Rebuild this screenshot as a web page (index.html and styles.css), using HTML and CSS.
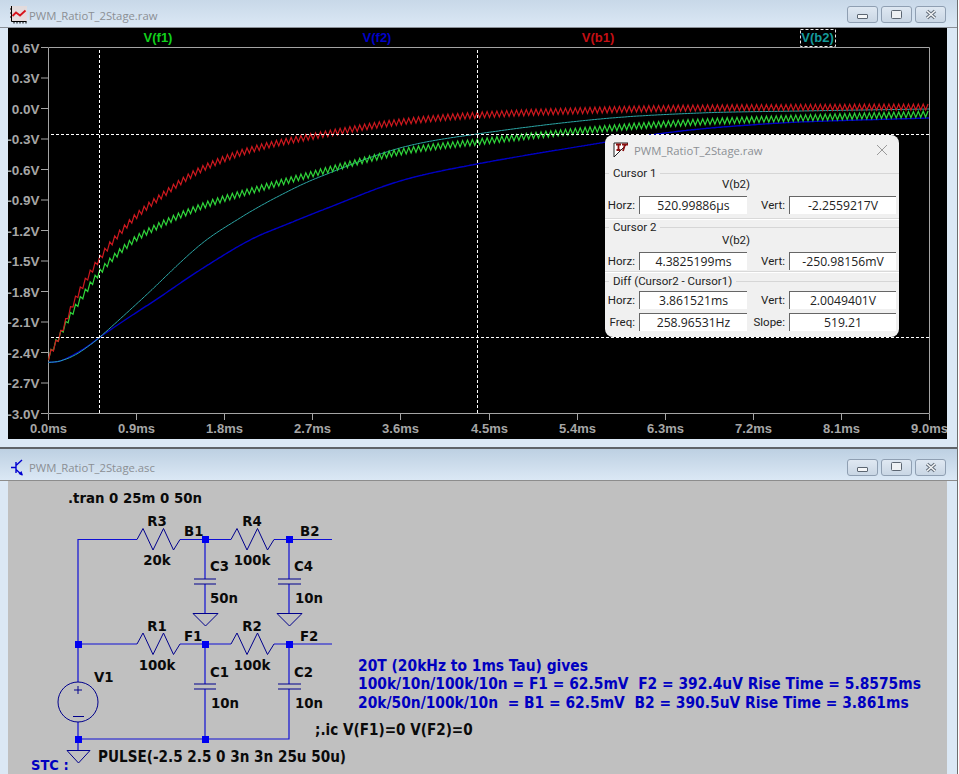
FILE: index.html
```html
<!DOCTYPE html>
<html lang="en">
<head>
<meta charset="utf-8">
<title>PWM_RatioT_2Stage</title>
<link rel="stylesheet" href="styles.css">
</head>
<body>
<div class="desktop">
  <section class="window window-plot">
    <header class="titlebar">
      <svg class="title-icon" width="17" height="18" viewBox="0 0 17 18">
        <rect x="0" y="0" width="17" height="15" fill="#f4d8d0" opacity=".55"/>
        <path class="ic-axis" d="M1.5 0V15.5H16.5M0 3H1.5M0 7H1.5M0 11H1.5M4 15.5V17.5M7 15.5V17.5M10 15.5V17.5M13 15.5V17.5M16 15.5V17.5"/>
        <path class="ic-curve" d="M2.5 10L6 6.5L10 9.5L15.5 4.5"/>
      </svg>
      <span class="title-text">PWM_RatioT_2Stage.raw</span>
      <div class="controls">
        <button class="ctl"><span class="ctl-min"></span></button>
        <button class="ctl"><span class="ctl-max"></span></button>
        <button class="ctl"><svg width="14" height="11" viewBox="0 0 14 11"><path class="ctl-x" d="M3 2L11 9M11 2L3 9"/><path class="ctl-xi" d="M3 2L11 9M11 2L3 9"/></svg></button>
      </div>
    </header>
    <div class="plot-area">
      <svg id="plot" class="plot" width="939" height="411" viewBox="8 28 939 411">
        <defs><clipPath id="frame"><rect x="48" y="47" width="882" height="367"/></clipPath></defs>
        <g id="axes"></g>
        <g id="curves" clip-path="url(#frame)"></g>
        <g class="cursors">
          <path d="M99.5 50V413M477.5 50V413M51 134.5H929M51 337.5H929"/>
        </g>
        <text class="legend l-green" x="158" y="42">V(f1)</text>
        <text class="legend l-blue" x="377" y="42">V(f2)</text>
        <text class="legend l-red" x="598" y="42">V(b1)</text>
        <text class="legend l-teal" x="817.5" y="42">V(b2)</text>
        <rect class="legend-box" x="800.5" y="29.5" width="35" height="17"/>
      </svg>
      <aside class="dialog">
        <header class="dlg-title">
          <svg width="16" height="16" viewBox="0 0 16 16">
            <path class="dlg-tri" d="M1 1H15L1 15Z"/>
            <path class="dlg-lt" d="M3 2.5H8M5.500 2.500V8M3.500 8H7.500M9 2.500H15M12 2.500L10 9"/>
          </svg>
          <span class="dlg-name">PWM_RatioT_2Stage.raw</span>
          <svg class="dlg-close" width="12" height="12" viewBox="0 0 12 12"><path d="M1 1L11 11M11 1L1 11"/></svg>
        </header>
        <div class="group group-a">
          <div class="group-head"><span>Cursor 1</span></div>
          <div class="trace">V(b2)</div>
          <div class="row"><label>Horz:</label><output>520.99886µs</output><label>Vert:</label><output>-2.2559217V</output></div>
        </div>
        <div class="group group-b">
          <div class="group-head"><span>Cursor 2</span></div>
          <div class="trace">V(b2)</div>
          <div class="row"><label>Horz:</label><output>4.3825199ms</output><label>Vert:</label><output>-250.98156mV</output></div>
        </div>
        <div class="group group-c">
          <div class="group-head"><span>Diff (Cursor2 - Cursor1)</span></div>
          <div class="row"><label>Horz:</label><output>3.861521ms</output><label>Vert:</label><output>2.0049401V</output></div>
          <div class="row row-last"><label>Freq:</label><output>258.96531Hz</output><label>Slope:</label><output>519.21</output></div>
        </div>
      </aside>
    </div>
  </section>

  <section class="window window-sch">
    <header class="titlebar titlebar-sch">
      <svg class="title-icon" width="14" height="17" viewBox="0 0 14 17">
        <path class="ic-tr" d="M5 3V14M0 8.500H5M5 6.500L11 1M5 10.500L11 16"/>
        <path class="ic-trh" d="M12 16.500L7.500 15L10.500 12Z"/>
      </svg>
      <span class="title-text">PWM_RatioT_2Stage.asc</span>
      <div class="controls">
        <button class="ctl"><span class="ctl-min"></span></button>
        <button class="ctl"><span class="ctl-max"></span></button>
        <button class="ctl"><svg width="14" height="11" viewBox="0 0 14 11"><path class="ctl-x" d="M3 2L11 9M11 2L3 9"/><path class="ctl-xi" d="M3 2L11 9M11 2L3 9"/></svg></button>
      </div>
    </header>
    <div class="sch-area">
      <svg class="sch" width="939" height="293" viewBox="8 481 939 293">
        <path class="wire" d="M78 644V539.500H137M180 539.500H231M274 539.500H332M205 539.500V579M205 584V613M289 539.500V579M289 584V613M78 644H137M180 644H231M274 644H332M205 644V684M205 689V739M289 644V684M289 689V739H78M78 644V682M78 722V750"/>
        <path class="part" d="M137 539.500L143 528.500L153 550L163.500 528.500L173.500 550L180 539.500M231 539.500L237 528.500L247 550L257.500 528.500L267.500 550L274 539.500M137 644L143 633L153 654.500L163.500 633L173.500 654.500L180 644M231 644L237 633L247 654.500L257.500 633L267.500 654.500L274 644"/>
        <path class="part" d="M194 579H216M194 584H216M278 579H301M278 584H301M194 684H216M194 689H216M278 684H301M278 689H301"/>
        <path class="part" d="M193 613.500H218L205.500 626ZM277 613.500H302L289.500 626ZM67 750.500H90L78.500 763Z"/>
        <circle class="part" cx="78" cy="702" r="20"/>
        <path class="part" d="M78 686V694M74 690H82M73 716.500H84"/>
        <g class="dots">
          <rect x="202" y="536" width="7" height="7"/><rect x="286" y="536" width="7" height="7"/>
          <rect x="75" y="641" width="7" height="7"/><rect x="202" y="641" width="7" height="7"/><rect x="286" y="641" width="7" height="7"/>
          <rect x="75" y="736" width="7" height="7"/><rect x="202" y="736" width="7" height="7"/>
        </g>
        <g class="labels">
          <text x="68" y="503">.tran 0 25m 0 50n</text>
          <text class="mid" x="157" y="526">R3</text><text class="mid" x="157" y="565">20k</text>
          <text x="184" y="536">B1</text>
          <text class="mid" x="252" y="526">R4</text><text class="mid" x="252" y="565">100k</text>
          <text x="300" y="536">B2</text>
          <text x="210" y="571">C3</text><text x="210" y="603">50n</text>
          <text x="294" y="571">C4</text><text x="295" y="603">10n</text>
          <text class="mid" x="157" y="631">R1</text><text class="mid" x="157" y="670">100k</text>
          <text x="184" y="641">F1</text>
          <text class="mid" x="252" y="631">R2</text><text class="mid" x="252" y="670">100k</text>
          <text x="300" y="641">F2</text>
          <text x="210" y="677">C1</text><text x="211" y="708">10n</text>
          <text x="294" y="677">C2</text><text x="295" y="708">10n</text>
          <text x="94" y="682">V1</text>
          <text class="wide" x="98" y="762">PULSE(-2.5 2.5 0 3n 3n 25u 50u)</text>
          <text class="wide" x="315" y="735">;.ic V(F1)=0 V(F2)=0</text>
        </g>
        <g class="notes">
          <text class="stc" x="31" y="770">STC :</text>
          <text x="358" y="671">20T (20kHz to 1ms Tau) gives</text>
          <text x="358" y="689" xml:space="preserve">100k/10n/100k/10n = F1 = 62.5mV  F2 = 392.4uV Rise Time = 5.8575ms</text>
          <text x="358" y="708" xml:space="preserve">20k/50n/100k/10n  = B1 = 62.5mV  B2 = 390.5uV Rise Time = 3.861ms</text>
        </g>
      </svg>
    </div>
  </section>
</div>
<script src="plot.js"></script>
</body>
</html>
```
FILE: styles.css
```css
* { box-sizing: border-box; }
html, body { margin: 0; padding: 0; }
body {
  width: 959px;
  height: 774px;
  overflow: hidden;
  background: #ffffff;
}
.desktop {
  width: 958px;
  height: 774px;
  border-right: 1px solid #6e6e6e;
  display: flex;
  flex-direction: column;
  font-family: "Open Sans", "Liberation Sans", sans-serif;
}
.window {
  background: #dbe8f5;
  padding: 0 10px 0 8px;
  flex: none;
}
.window-plot { height: 449px; border-bottom: 2px solid #5f6368; }
.window-sch { flex: 1; }
.titlebar {
  height: 28px;
  margin: 0 -10px 0 -8px;
  padding: 0 11px 0 10px;
  display: flex;
  align-items: center;
  gap: 2px;
  background: linear-gradient(#c8d8e8, #dbe8f5);
  border-bottom: 1px solid #8a8f96;
}
.titlebar-sch { height: 32px; background: linear-gradient(#bdd0e2, #dbe8f5); border-bottom-color: #8c8c8c; padding-left: 11px; gap: 4px; }
.title-icon { flex: none; margin-top: 2px; }
.titlebar-sch .title-icon { margin-top: 6px; }
.ic-axis { fill: none; stroke: #000; stroke-width: 1; }
.ic-curve { fill: none; stroke: #d8141c; stroke-width: 1.8; }
.ic-tr { fill: none; stroke: #0000d0; stroke-width: 1.4; }
.ic-trh { fill: #0000d0; }
.title-text {
  margin-top: 3px;
  font-size: 11.3px;
  color: #8b8f94;
  white-space: nowrap;
}
.titlebar-sch .title-text { margin-top: 6px; }
.controls {
  margin-left: auto;
  margin-top: 2px;
  display: flex;
  gap: 3px;
}
.titlebar-sch .controls { margin-top: 5px; }
.ctl {
  width: 31px;
  height: 17px;
  padding: 0;
  display: flex;
  align-items: center;
  justify-content: center;
  border: 1px solid #8f9fb2;
  border-radius: 3px;
  background: linear-gradient(#dfe8f2, #c9d6e4);
}
.ctl-min {
  display: block;
  width: 11px;
  height: 5px;
  margin-top: 4px;
  border: 1px solid #5c6672;
  border-radius: 1px;
  background: #f4f6f8;
}
.ctl-max {
  display: block;
  width: 11px;
  height: 9px;
  margin-bottom: 1px;
  border: 1.5px solid #5c6672;
  border-radius: 1.5px;
  background: #eef1f4;
}
.ctl-x { fill: none; stroke: #66707c; stroke-width: 3.6; }
.ctl-xi { fill: none; stroke: #f6f7f8; stroke-width: 1.4; }
.plot-area {
  position: relative;
  width: 939px;
  height: 411px;
  background: #000;
}
.plot { display: block; font-family: "Liberation Sans", Arial, sans-serif; }
.axis-line { fill: none; stroke: #a4a4a4; stroke-width: 1; }
.axis-label { fill: #a6a6a6; font-size: 13px; font-weight: 700; }
.y-label { font-size: 13.5px; text-anchor: end; }
.x-label { text-anchor: middle; }
.curve { fill: none; stroke-width: 1.2; stroke-linejoin: miter; }
.c-green { stroke: #2fd43a; }
.c-red { stroke: #cc181e; }
.c-blue { stroke: #0000c4; stroke-width: 1.4; }
.c-teal { stroke: #2ba5a5; stroke-width: 1; }
.cursors path { fill: none; stroke: #ffffff; stroke-width: 1; stroke-dasharray: 3 2; }
.legend { font-size: 13px; font-weight: 700; text-anchor: middle; }
.l-green { fill: #12d01c; }
.l-blue { fill: #0000c8; }
.l-red { fill: #c40f14; }
.l-teal { fill: #159a9a; }
.legend-box { fill: none; stroke: #e8e8e8; stroke-width: 1; stroke-dasharray: 3 2; }

.dialog {
  position: absolute;
  left: 597px;
  top: 107px;
  width: 294px;
  height: 202px;
  background: #f0f0f0;
  border-radius: 8px;
  font-size: 12px;
  color: #222;
  overflow: hidden;
}
.dlg-title {
  height: 32px;
  padding: 0 10px 2px 8px;
  display: flex;
  align-items: center;
  gap: 5px;
}
.dlg-tri { fill: #fff; stroke: #222; stroke-width: 1; }
.dlg-lt { fill: none; stroke: #8c1010; stroke-width: 1.8; }
.dlg-name { font-size: 11.3px; color: #8b8f94; }
.dlg-close { margin-left: auto; margin-right: 1px; }
.dlg-close path { fill: none; stroke: #9a9a9a; stroke-width: 1; }
.group { border-bottom: 1px solid #d9d9d9; box-shadow: 0 1px 0 #fff; }
.group-a { height: 52px; }
.group-b { height: 53px; padding-top: 2px; }
.group-c { border-bottom: 0; box-shadow: none; padding-top: 3px; }
.group-head {
  height: 12px;
  margin-bottom: -1px;
  display: flex;
  align-items: center;
  font-family: Roboto, "Liberation Sans", sans-serif;
  font-size: 11.5px;
  line-height: 12px;
}
.group-head::before, .group-head::after {
  content: "";
  height: 1px;
  background: #d6d6d6;
}
.group-head::before { width: 4px; margin-right: 4px; flex: none; }
.group-head::after { flex: 1; margin-left: 4px; }
.group-c .group-head { margin-bottom: 4px; }
.trace {
  height: 12px;
  line-height: 12px;
  margin-bottom: 6px;
  padding-right: 32px;
  text-align: center;
  font-family: Roboto, "Liberation Sans", sans-serif;
  font-size: 11.5px;
}
.group-b .trace { margin-top: 2px; }
.row {
  display: grid;
  grid-template-columns: 34px 108px 42px 107px;
  height: 17px;
  align-items: center;
}
.row label {
  text-align: right;
  padding-right: 4px;
  white-space: nowrap;
  font-family: Roboto, "Liberation Sans", sans-serif;
  font-size: 11.5px;
}
.row output {
  display: block;
  height: 100%;
  background: #fff;
  border-top: 1px solid #666;
  border-left: 1px solid #666;
  text-align: center;
  font-size: 12.2px;
  line-height: 17px;
  white-space: nowrap;
}
.row-last { margin-top: 5px; height: 18px; }

.sch-area {
  width: 939px;
  height: 293px;
  background: #c0c0c0;
}
.sch { display: block; font-family: "DejaVu Sans", sans-serif; }
.wire { fill: none; stroke: #1010d4; stroke-width: 1.2; }
.part { fill: none; stroke: #00008c; stroke-width: 1; }
.dots rect { fill: #0000f0; }
.labels text { fill: #0a0a0a; font-size: 14.8px; font-weight: 700; font-stretch: condensed; }
.labels text.mid { text-anchor: middle; }
.labels text.wide { font-size: 15.1px; }
.notes text { fill: #0000c0; font-size: 15.4px; font-weight: 700; font-stretch: condensed; white-space: pre; }
.notes text.stc { font-size: 14.5px; }
```
FILE: plot.js
```js
(function () {
  var NS = "http://www.w3.org/2000/svg";
  var axes = document.getElementById("axes");
  var curves = document.getElementById("curves");

  function el(parent, name, attrs, text) {
    var node = document.createElementNS(NS, name);
    Object.keys(attrs).forEach(function (k) { node.setAttribute(k, attrs[k]); });
    if (text) node.textContent = text;
    parent.appendChild(node);
    return node;
  }

  var d = "M48.500 47.500H929.500V413.500H48.500Z";
  var yLabels = ["0.6V","0.3V","0.0V","-0.3V","-0.6V","-0.9V","-1.2V","-1.5V","-1.8V","-2.1V","-2.4V","-2.7V","-3.0V"];
  yLabels.forEach(function (label, i) {
    var y = 47.5 + 30.5 * i;
    d += "M41 " + y + "H48";
    el(axes, "text", { "class": "axis-label y-label", x: 39.5, y: y + 5 }, label);
  });
  for (var i = 0; i <= 10; i++) {
    var x = Math.round(48 + 88.1 * i) + 0.5;
    d += "M" + x + " 414V420";
    el(axes, "text", { "class": "axis-label x-label", x: x, y: 433 }, (0.9 * i).toFixed(1) + "ms");
  }
  el(axes, "path", { "class": "axis-line", d: d });

  function interp(pts, x) {
    var k = 0;
    while (k < pts.length - 2 && x > pts[k + 1][0]) k++;
    var p0 = pts[Math.max(k - 1, 0)], p1 = pts[k], p2 = pts[k + 1], p3 = pts[Math.min(k + 2, pts.length - 1)];
    var h = p2[0] - p1[0], t = (x - p1[0]) / h;
    var m1 = (p2[1] - p0[1]) / (p2[0] - p0[0]) * h;
    var m2 = (p3[1] - p1[1]) / (p3[0] - p1[0]) * h;
    var t2 = t * t, t3 = t2 * t;
    return (2 * t3 - 3 * t2 + 1) * p1[1] + (t3 - 2 * t2 + t) * m1 + (-2 * t3 + 3 * t2) * p2[1] + (t3 - t2) * m2;
  }

  function curve(cls, pts, amp) {
    var out = [];
    var step = amp ? 2.45 : 1.5;
    var n = Math.floor((929 - 48) / step);
    for (var j = 0; j <= n; j++) {
      var px = 48.5 + j * step;
      var off = amp ? (j % 2 ? -amp : amp) : 0;
      out.push(px.toFixed(1) + "," + (interp(pts, px) + off).toFixed(1));
    }
    el(curves, "polyline", { "class": "curve " + cls, points: out.join(" ") });
  }

  var blue = [[48,362.5],[60,361],[75,354],[88,346],[100,337],[125,320],[157,299],[200,270],[250,240],[290,223],[325,209],[400,181],[477,164],[600,143],[650,135],[700,129],[750,125],[800,122],[929,118]];
  var teal = [[48,362.5],[60,361],[75,355],[90,345],[100,337],[143,298],[200,245],[240,218],[277,197],[317,178],[400,148],[477,134],[600,119],[700,113],[800,111],[929,109]];
  var green = [[48,358],[60,335],[75,308],[100,272],[130,243],[160,225],[200,207],[240,194],[320,172],[400,152],[477,142],[600,129],[700,122],[800,118],[929,114]];
  var red = [[48,358],[60,335],[75,300],[100,258],[130,222],[160,197],[200,170],[250,150],[320,135],[400,122],[480,115],[600,110],[700,108],[929,107]];

  curve("c-blue", blue, 0);
  curve("c-teal", teal, 0);
  curve("c-green", green, 3);
  curve("c-red", red, 3);
})();
```
